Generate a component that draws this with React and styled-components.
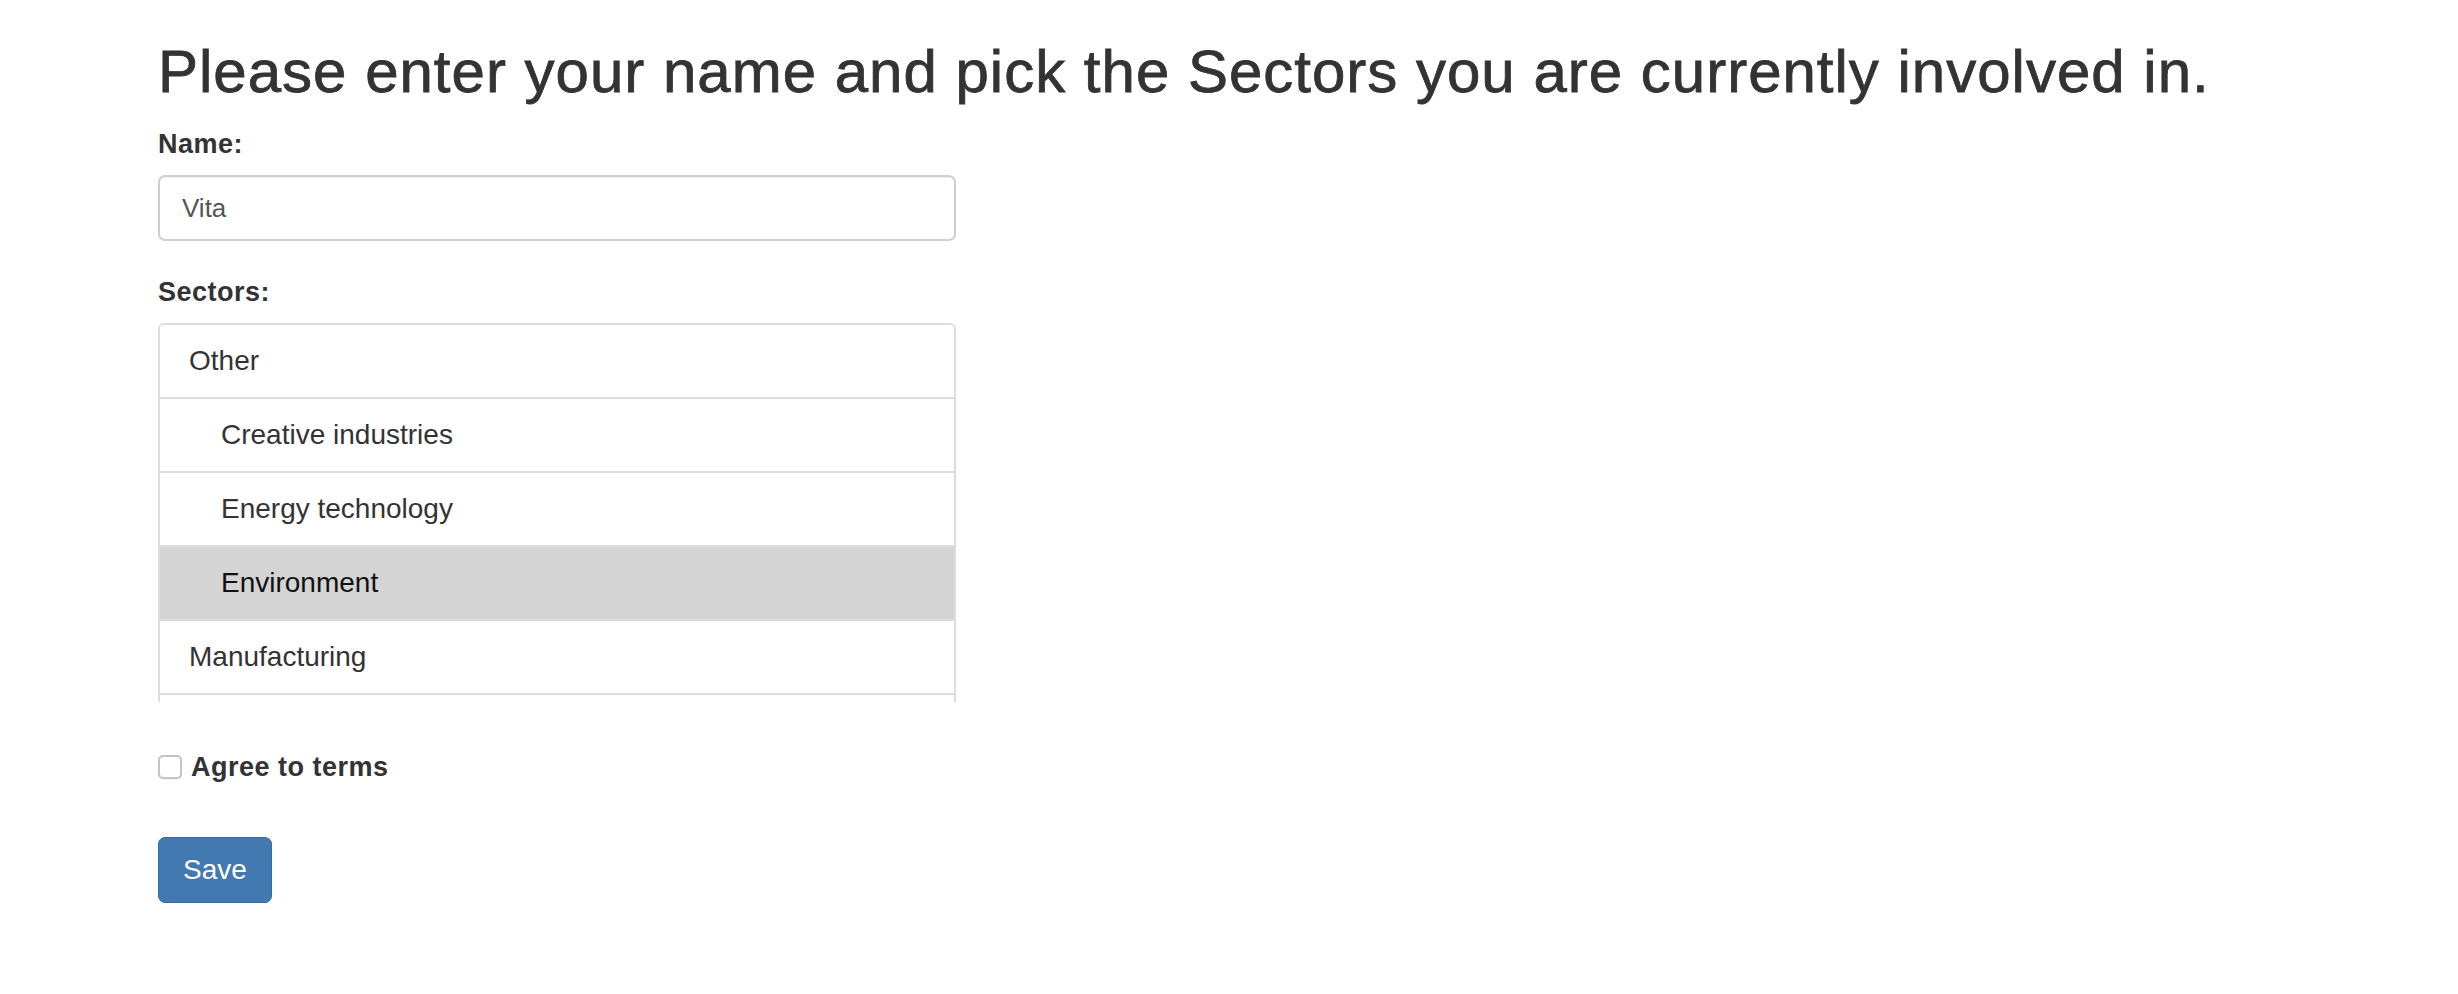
import React from "react";
import styled, { createGlobalStyle } from "styled-components";

const GlobalStyle = createGlobalStyle`
  html, body {
    margin: 0;
    padding: 0;
    background: #ffffff;
  }
  body {
    font-family: "Liberation Sans", Arial, "Helvetica Neue", sans-serif;
    color: #333333;
  }
  * { box-sizing: border-box; }
`;

const Page = styled.main`
  padding: 0 0 0 158px;
`;

const Title = styled.h1`
  margin: 39px 0 20px 0;
  font-size: 60px;
  line-height: 66px;
  font-weight: 400;
  letter-spacing: 1px;
  -webkit-text-stroke: 0.8px #333333;
  color: #333333;
  white-space: nowrap;
`;

const Form = styled.form`
  display: flex;
  flex-direction: column;
  align-items: flex-start;
  width: 798px;
`;

const Field = styled.div`
  display: flex;
  flex-direction: column;
  width: 100%;
  margin-bottom: ${(p) => p.$gap || 0}px;
`;

const Label = styled.label`
  display: block;
  font-size: 27px;
  line-height: 38px;
  font-weight: 700;
  letter-spacing: 0.5px;
  color: #333333;
  margin-bottom: 12px;
`;

const TextInput = styled.input`
  width: 100%;
  height: 66px;
  padding: 0 22px;
  font-family: inherit;
  font-size: 26px;
  color: #555555;
  background: #ffffff;
  border: 2px solid #cfcfcf;
  border-radius: 7px;
  box-shadow: inset 0 1px 1px rgba(0, 0, 0, 0.06);
  outline: none;
`;

const SectorList = styled.div`
  height: 379px;
  overflow: hidden;
  border: 2px solid #dddddd;
  border-bottom: none;
  border-radius: 6px 6px 0 0;
`;

const SectorItem = styled.div`
  display: block;
  padding: 16px 20px 16px ${(p) => 29 + p.$level * 32}px;
  font-size: 28px;
  line-height: 40px;
  color: ${(p) => (p.$selected ? "#111111" : "#333333")};
  background: ${(p) => (p.$selected ? "#d4d4d4" : "#ffffff")};
  border-bottom: 2px solid #dddddd;
`;

const CheckRow = styled.label`
  display: flex;
  align-items: center;
  gap: 9px;
  margin-top: 46px;
  height: 38px;
`;

const Checkbox = styled.input`
  appearance: none;
  -webkit-appearance: none;
  margin: 0;
  width: 24px;
  height: 24px;
  border: 2px solid #c4c4c4;
  border-radius: 5px;
  background: #ffffff;
  box-shadow: 0 1px 1px rgba(0, 0, 0, 0.05);
`;

const CheckText = styled.span`
  font-size: 27px;
  line-height: 38px;
  font-weight: 700;
  letter-spacing: 0.5px;
  color: #333333;
`;

const SaveButton = styled.button`
  margin-top: 51px;
  padding: 12px 24px;
  font-family: inherit;
  font-size: 28px;
  line-height: 40px;
  color: #ffffff;
  background: #4379b1;
  border: 1px solid #3a6ca2;
  border-radius: 7px;
  cursor: pointer;
`;

const sectors = [
  { name: "Other", level: 0 },
  { name: "Creative industries", level: 1 },
  { name: "Energy technology", level: 1 },
  { name: "Environment", level: 1, selected: true },
  { name: "Manufacturing", level: 0 },
];

export default function App() {
  return (
    <>
      <GlobalStyle />
      <Page>
        <Title>Please enter your name and pick the Sectors you are currently involved in.</Title>
        <Form onSubmit={(e) => e.preventDefault()}>
          <Field $gap={32}>
            <Label>Name:</Label>
            <TextInput type="text" defaultValue="Vita" />
          </Field>
          <Field>
            <Label>Sectors:</Label>
            <SectorList>
              {sectors.map((s) => (
                <SectorItem key={s.name} $level={s.level} $selected={s.selected}>
                  {s.name}
                </SectorItem>
              ))}
            </SectorList>
          </Field>
          <CheckRow>
            <Checkbox type="checkbox" />
            <CheckText>Agree to terms</CheckText>
          </CheckRow>
          <SaveButton type="submit">Save</SaveButton>
        </Form>
      </Page>
    </>
  );
}
